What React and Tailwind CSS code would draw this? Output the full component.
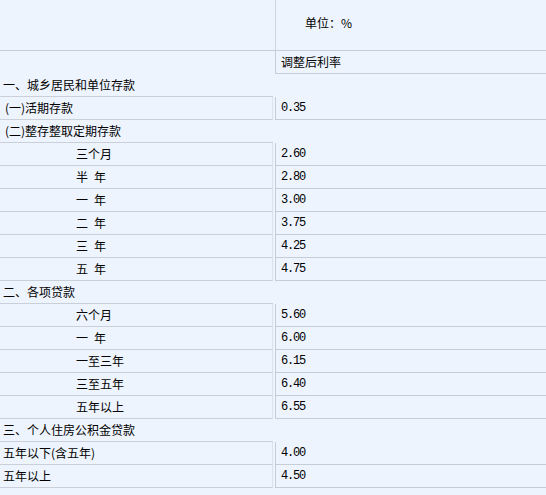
import React from 'react';

const rows = [
  { type: 'head', label: '一、城乡居民和单位存款' },
  { type: 'item', label: '(一)活期存款', value: '0.35' },
  { type: 'head', label: '(二)整存整取定期存款' },
  { type: 'sub', label: '三个月', value: '2.60' },
  { type: 'sub', label: '半\u2002年', value: '2.80' },
  { type: 'sub', label: '一\u2002年', value: '3.00' },
  { type: 'sub', label: '二\u2002年', value: '3.75' },
  { type: 'sub', label: '三\u2002年', value: '4.25' },
  { type: 'sub', label: '五\u2002年', value: '4.75' },
  { type: 'head', label: '二、各项贷款' },
  { type: 'sub', label: '六个月', value: '5.60' },
  { type: 'sub', label: '一\u2002年', value: '6.00' },
  { type: 'sub', label: '一至三年', value: '6.15' },
  { type: 'sub', label: '三至五年', value: '6.40' },
  { type: 'sub', label: '五年以上', value: '6.55' },
  { type: 'head', label: '三、个人住房公积金贷款' },
  { type: 'item', label: '五年以下(含五年)', value: '4.00' },
  { type: 'item', label: '五年以上', value: '4.50' },
];

function Row({ row }) {
  const pad = row.type === 'sub' ? 'pl-[76px]' : row.label.startsWith('(') ? 'pl-[5px]' : 'pl-[3px]';
  if (row.type === 'head') {
    return (
      <div className="flex h-[23px]">
        <div className={'w-[273px] border-b border-[#c9d0da] flex items-center ' + pad}>{row.label}</div>
      </div>
    );
  }
  return (
    <div className="flex h-[23px]">
      <div
        className={
          'w-[273px] border-b border-r border-b-[#c9d0da] border-r-[#dde3ec] flex items-center ' + pad
        }
      >
        {row.label}
      </div>
      <div className="w-[2px]" />
      <div className="flex-1 border-l border-b border-[#c6cdd7] pl-[5px] flex items-center font-['Liberation_Mono',monospace] tracking-[-1.2px]">
        {row.value}
      </div>
    </div>
  );
}

export default function App() {
  return (
    <div className="w-[546px] h-[495px] bg-[#eef4fd] text-[12px] text-black font-['Noto_Sans_CJK_SC',sans-serif] leading-none">
      {/* 表头 */}
      <div className="flex h-[51px] border-b border-[#c6cdd7]">
        <div className="w-[275px]" />
        <div className="flex-1 border-l border-[#d0d6df] pl-[29px] pb-[4px] flex items-center">单位：%</div>
      </div>
      <div className="flex h-[23px]">
        <div className="w-[275px]" />
        <div className="flex-1 border-l border-b border-[#c6cdd7] pl-[5px] flex items-center">调整后利率</div>
      </div>
      {rows.map((row, i) => (
        <Row key={i} row={row} />
      ))}
    </div>
  );
}
